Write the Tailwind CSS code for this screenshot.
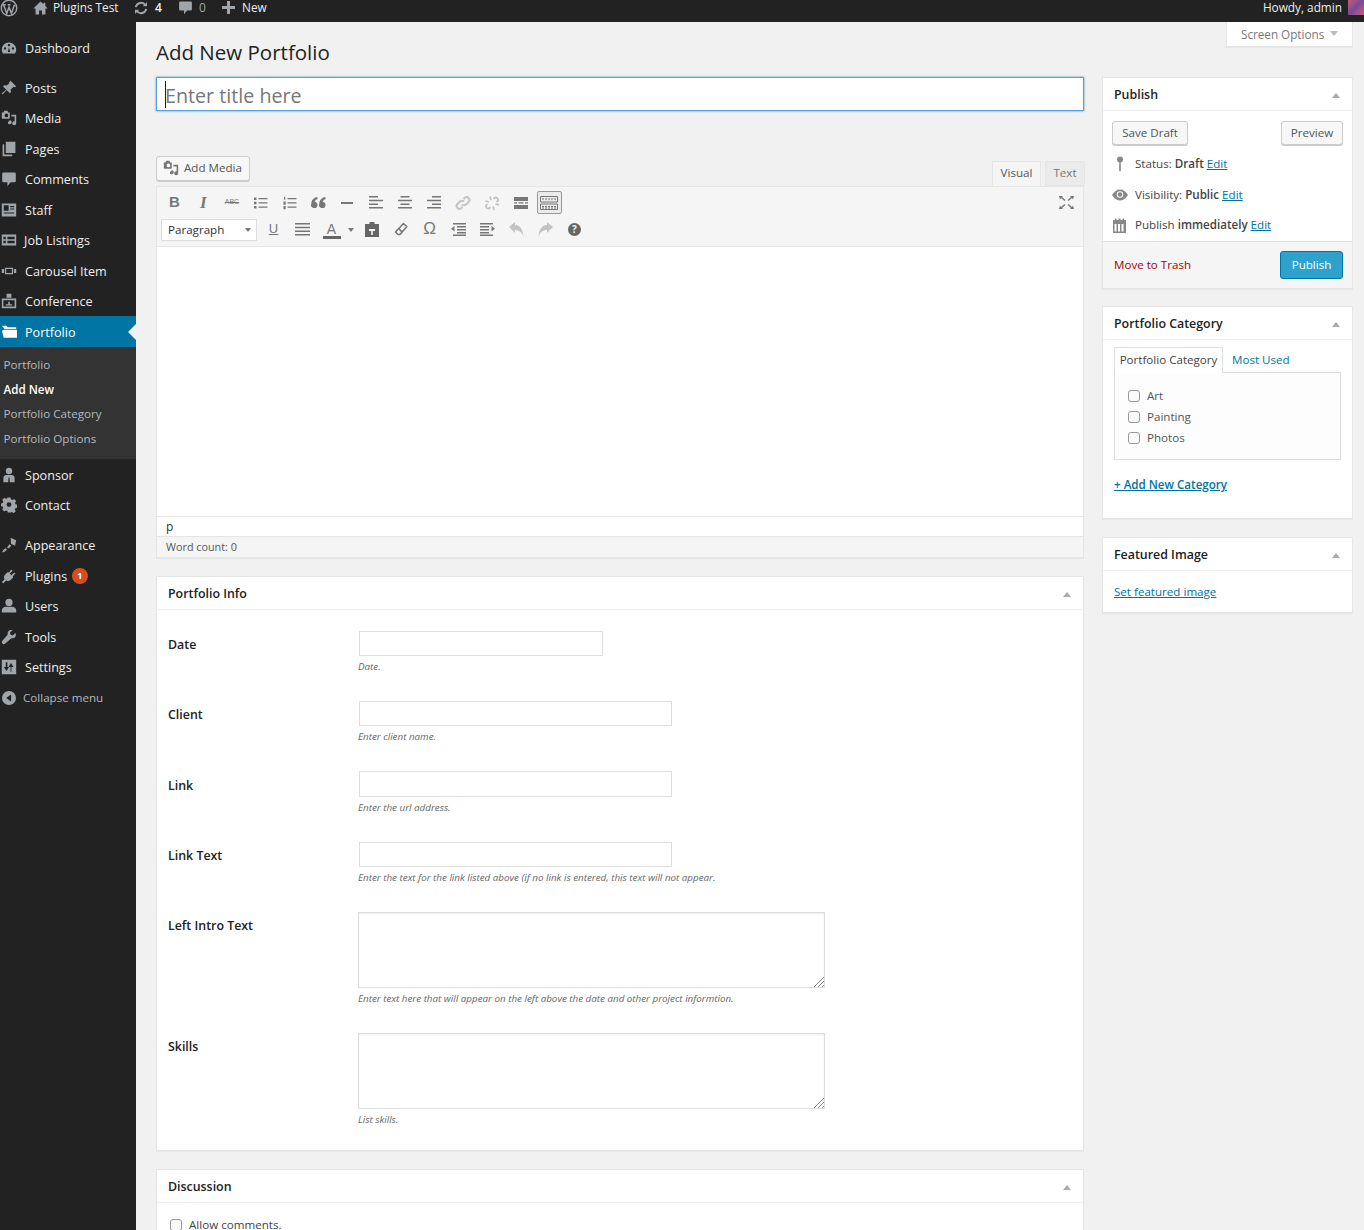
<!DOCTYPE html>
<html lang="en"><head><meta charset="utf-8"><title>Add New Portfolio</title>
<script src="https://cdn.jsdelivr.net/npm/@tailwindcss/browser@4"></script></head>
<body class="m-0 bg-[#f1f1f1] font-['Open_Sans',sans-serif] text-[12.6px] text-[#444]">
<div class="w-[1364px] h-[1230px] overflow-hidden flex flex-col">
<!-- top bar -->
<header class="h-[22px] shrink-0 bg-[#222] text-[#eee] flex items-center text-[11.8px] leading-[15px] pb-[7px] whitespace-nowrap">
  <svg class="w-[18px] h-[18px] shrink-0" viewBox="0 0 20 20" fill="none" stroke="#a0a5aa"><circle cx="10" cy="10" r="8.6" stroke-width="1.6"/><path d="M4 6.5 7.5 16 10 9l2.7 7 3.4-9.5M3.500 6.500h3M8.500 6.500h3.200" stroke-width="1.7"/></svg>
  <svg class="w-[17px] h-[16px] ml-[14px] shrink-0" viewBox="0 0 20 20" fill="#a0a5aa"><path d="M10 2 1 10.500h2.800V18h4.400v-5h3.600v5h4.400v-7.500H19l-3-2.900V3.500h-2.400v1.800z"/></svg>
  <span class="ml-[4px] w-[65px]">Plugins Test</span>
  <svg class="w-[16px] h-[16px] ml-[15px] shrink-0" viewBox="0 0 20 20" fill="none" stroke="#a0a5aa" stroke-width="2.4"><path d="M3.500 9a6.600 6.600 0 0 1 12-2.500M16.500 11a6.600 6.600 0 0 1-12 2.500"/><path d="M17.500 2.500v5.200h-5.200M2.500 17.500v-5.200h5.200" fill="#a0a5aa" stroke="none"/></svg>
  <span class="ml-[6px] w-[10px] text-[12px] font-semibold">4</span>
  <svg class="w-[15px] h-[15px] ml-[13px] shrink-0" viewBox="0 0 20 20" fill="#a0a5aa"><path d="M3 2h14a1.500 1.500 0 0 1 1.500 1.500v9A1.500 1.500 0 0 1 17 14h-5l-4 5v-5H3a1.500 1.500 0 0 1-1.500-1.500v-9A1.500 1.500 0 0 1 3 2z"/></svg>
  <span class="ml-[6px] w-[10px] text-[12px] text-[#a0a5aa]">0</span>
  <svg class="w-[13px] h-[13px] ml-[13px] shrink-0" viewBox="0 0 13 13" fill="#a0a5aa"><path d="M5 0h3v5h5v3H8v5H5V8H0V5h5z"/></svg>
  <span class="ml-[7px]">New</span>
  <span class="ml-auto mr-[6px] text-[#eee]">Howdy, admin</span>
  <span class="w-[16px] h-[16px] -mt-[2px] bg-gradient-to-br from-[#d1577c] via-[#7a4a94] to-[#c85a82]"></span>
</header>
<div class="flex flex-1 min-h-0">
<!-- sidebar -->
<aside class="w-[136px] shrink-0 bg-[#222] text-[#eee] pt-[10.250px]">
  <nav class="flex flex-col">
    <a class="h-[30.500px] flex items-center gap-[8px] pl-[1px]"><svg class="w-[16px] h-[16px] shrink-0" viewBox="0 0 20 20" fill="#a0a5aa"><path d="M10 3a9 9 0 0 0-9 9c0 2 .6 3.600 1.600 5h14.800A9 9 0 0 0 10 3zm-5 9a1.500 1.500 0 1 1 0-3 1.500 1.500 0 0 1 0 3zm4-4.500a1.500 1.500 0 1 1 2 0 1.500 1.500 0 0 1-2 0zM11.500 15h-3L10 9zM15 12a1.500 1.500 0 1 1 0-3 1.500 1.500 0 0 1 0 3z" fill-rule="evenodd"/></svg><span class="pt-[3px]">Dashboard</span></a>
    <div class="h-[9.500px]"></div>
    <a class="h-[30.500px] flex items-center gap-[8px] pl-[1px]"><svg class="w-[16px] h-[16px] shrink-0" viewBox="0 0 20 20" fill="#a0a5aa"><path d="M12 1l7 7-2 1-1-.5L12 12l.5 3-1.500 1.500-4-4L2 18l-1-1 5.500-5-4-4L4 6.500l3 .5L10.500 4 10 3z"/></svg><span class="pt-[3px]">Posts</span></a>
    <a class="h-[30.500px] flex items-center gap-[8px] pl-[1px]"><svg class="w-[16px] h-[16px] shrink-0" viewBox="0 0 20 20" fill="#a0a5aa"><path d="M1 3h2l1-2h4l1 2h2v7a1 1 0 0 1-1 1H2a1 1 0 0 1-1-1zm5.800 1.500a2.300 2.300 0 1 0 0 4.600 2.300 2.300 0 0 0 0-4.600zM13 6h6v10.500a2.500 2.500 0 1 1-2-2.400V8h-4zM10.500 13a2.500 2.500 0 1 1-2 2.500z" fill-rule="evenodd"/></svg><span class="pt-[3px]">Media</span></a>
    <a class="h-[30.500px] flex items-center gap-[8px] pl-[1px]"><svg class="w-[16px] h-[16px] shrink-0" viewBox="0 0 20 20" fill="#a0a5aa"><path d="M6 1h12v14H6zM2 4h2v13h10v2H2z"/></svg><span class="pt-[3px]">Pages</span></a>
    <a class="h-[30.500px] flex items-center gap-[8px] pl-[1px]"><svg class="w-[16px] h-[16px] shrink-0" viewBox="0 0 20 20" fill="#a0a5aa"><path d="M3 2h14a1.500 1.500 0 0 1 1.500 1.500v9A1.500 1.500 0 0 1 17 14h-5l-4 5v-5H3a1.500 1.500 0 0 1-1.500-1.500v-9A1.500 1.500 0 0 1 3 2z"/></svg><span class="pt-[3px]">Comments</span></a>
    <a class="h-[30.500px] flex items-center gap-[8px] pl-[1px]"><svg class="w-[16px] h-[16px] shrink-0" viewBox="0 0 20 20" fill="#a0a5aa"><path d="M1 2h18v16H1zm2.500 2v7h6V4zm8 1v1.500h5V5zm0 3v1.500h5V8zM3.500 13v1.500h13V13z" fill-rule="evenodd"/></svg><span class="pt-[3px]">Staff</span></a>
    <a class="h-[30.500px] flex items-center gap-[7px] pl-[1px]"><svg class="w-[16px] h-[16px] shrink-0" viewBox="0 0 20 20" fill="#a0a5aa"><path d="M1 3h18v14H1zm2 3v3h3V6zm5 0v3h9V6zm-5 5v3h3v-3zm5 0v3h9v-3z" fill-rule="evenodd"/></svg><span class="pt-[3px]">Job Listings</span></a>
    <a class="h-[30.500px] flex items-center gap-[8px] pl-[1px]"><svg class="w-[16px] h-[16px] shrink-0" viewBox="0 0 20 20" fill="#a0a5aa"><path d="M5 6h10v8H5zm1.500 1.500v5h7v-5zM1 7.500h3v5H1zm15 0h3v5h-3z" fill-rule="evenodd"/></svg><span class="pt-[3px]">Carousel Item</span></a>
    <a class="h-[30.500px] flex items-center gap-[8px] pl-[1px]"><svg class="w-[16px] h-[16px] shrink-0" viewBox="0 0 20 20" fill="#a0a5aa"><path d="M7 1h6v5H7zM1 7h18v12H1zm2 2v8h14V9zm3 5h8v1.500H6zm3-3h2v3H9z" fill-rule="evenodd"/></svg><span class="pt-[3px]">Conference</span></a>
    <a class="h-[31px] flex items-center gap-[7px] pl-[1px] bg-[#0074a2] text-white relative"><svg class="w-[17px] h-[15px] shrink-0" viewBox="0 0 20 18" fill="#fff"><path d="M1 2l5 0 2 2h10v2H4L2 3.500zM3 7h16v9.500H3L1 8z"/></svg><span class="pt-[3px]">Portfolio</span><span class="absolute right-0 top-[8px] w-0 h-0 border-y-[8px] border-y-transparent border-r-[8px] border-r-[#f1f1f1]"></span></a>
    <div class="bg-[#333] h-[112px] pt-[5px] pl-[3.500px] text-[#b4b9be] text-[11.650px] flex flex-col">
      <a class="h-[24.700px] flex items-center">Portfolio</a>
      <a class="h-[24.700px] flex items-center text-white font-semibold">Add New</a>
      <a class="h-[24.700px] flex items-center">Portfolio Category</a>
      <a class="h-[24.700px] flex items-center">Portfolio Options</a>
    </div>
    <a class="h-[30.500px] flex items-center gap-[8px] pl-[1px]"><svg class="w-[16px] h-[16px] shrink-0" viewBox="0 0 20 20" fill="#a0a5aa"><circle cx="10" cy="5" r="4"/><path d="M3 19v-5a4 4 0 0 1 4-4h6a4 4 0 0 1 4 4v5h-6l-.4-6h-1.200L9 19z"/></svg><span class="pt-[3px]">Sponsor</span></a>
    <a class="h-[30.500px] flex items-center gap-[8px] pl-[1px]"><svg class="w-[16px] h-[16px] shrink-0" viewBox="0 0 20 20" fill="#a0a5aa"><path d="M8 1h4l.5 2.500 1.800.8L16.500 3 19 5.800l-1.500 2 .5 1.700 2 .5v4l-2 .5-.8 1.800 1.300 2-2.800 2.400-2-1.300-1.700.6L11.500 20h-3L8 18l-1.800-.7-2 1.200L1.500 16l1.200-2L2 12.300 0 12V8.500l2-.5.800-1.800L1.500 4.200 4 1.500l2.100 1.300L8 2zm2 6a3 3 0 1 0 0 6 3 3 0 0 0 0-6z" fill-rule="evenodd" transform="translate(0 -.5)"/></svg><span class="pt-[3px]">Contact</span></a>
    <div class="h-[9.500px]"></div>
    <a class="h-[30.500px] flex items-center gap-[8px] pl-[1px]"><svg class="w-[16px] h-[16px] shrink-0" viewBox="0 0 20 20" fill="#a0a5aa"><path d="M12 1l7 3-1.500 7-5-2.500zM10.500 9l2.500 2-3.500 3.500-2-1.500zM6 14l1.500 1.500C6 18 3 19 1 19c1.500-1.500 2-4 5-5z"/></svg><span class="pt-[3px]">Appearance</span></a>
    <a class="h-[30.500px] flex items-center pl-[1px]"><svg class="w-[16px] h-[16px] shrink-0 mr-[8px]" viewBox="0 0 20 20" fill="#a0a5aa"><path d="M13 2l1.500 1.500L11 7l2 2 3.500-3.500L18 7l-3.500 3.500 1 1L12 15c-2 2-4 1.500-5.500.5L3 19l-2-1.500 3.500-3.500C3.500 12.500 3 10.500 5 8.500L8.500 5l1 1z"/></svg><span class="pt-[3px]">Plugins</span><span class="ml-[4.500px] w-[16px] h-[16px] rounded-full bg-[#d54e21] text-white text-[9px] font-bold flex items-center justify-center">1</span></a>
    <a class="h-[30.500px] flex items-center gap-[8px] pl-[1px]"><svg class="w-[16px] h-[16px] shrink-0" viewBox="0 0 20 20" fill="#a0a5aa"><circle cx="10" cy="5.500" r="4.500"/><path d="M1 18v-2c0-3 2.500-5 5-5h8c2.500 0 5 2 5 5v2z"/></svg><span class="pt-[3px]">Users</span></a>
    <a class="h-[30.500px] flex items-center gap-[8px] pl-[1px]"><svg class="w-[16px] h-[16px] shrink-0" viewBox="0 0 20 20" fill="#a0a5aa"><path d="M18 5l-3.500 3-2.500-.8L11.200 4.500 14.500 1.500C11 0 7.500 3 8.500 6.800L1.500 15a2.500 2.500 0 0 0 3.500 3.500l8-7C16.500 12.500 20 9 18 5z"/></svg><span class="pt-[3px]">Tools</span></a>
    <a class="h-[30.500px] flex items-center gap-[8px] pl-[1px]"><svg class="w-[16px] h-[16px] shrink-0" viewBox="0 0 20 20" fill="#a0a5aa"><path d="M1 1h18v18H1zm5 3v6H3.500L7 15l3-5H8V4zm7 12v-6h2.500L12.500 5l-3 5H12v6z" fill-rule="evenodd"/></svg><span class="pt-[3px]">Settings</span></a>
    <a class="h-[30.500px] flex items-center gap-[7px] pl-[2px] text-[#b4b9be]"><svg class="w-[14px] h-[14px] shrink-0" viewBox="0 0 20 20" fill="#a0a5aa"><path d="M10 0a10 10 0 1 0 0 20 10 10 0 0 0 0-20zm3 5v10L6 10z" fill-rule="evenodd"/></svg><span class="text-[11.600px]">Collapse menu</span></a>
  </nav>
</aside>
<!-- main -->
<main class="flex-1 min-w-0 relative pl-[20px] pr-[11px]">
  <div class="absolute right-[11px] top-0 w-[127px] h-[25px] bg-white border-x border-b border-[#e5e5e5] shadow-[0_1px_1px_rgba(0,0,0,0.04)] text-[11.700px] text-[#777] flex items-center pl-[14px] pt-[1px]">Screen Options<span class="ml-[6px] -mt-[3px] w-0 h-0 border-x-[4px] border-x-transparent border-t-[5px] border-t-[#bbb]"></span></div>
  <h1 class="text-[20.500px] leading-[29px] text-[#222] pt-[16px] h-[55px] font-normal">Add New Portfolio</h1>
  <div class="flex gap-[18px] items-start">
    <!-- left column -->
    <div class="w-[928px] shrink-0">
      <div class="h-[34px] bg-white border border-[#5b9dd9] shadow-[0_0_2px_rgba(30,140,190,0.8)] flex items-center pl-[8px] text-[19.700px] text-[#777]"><span class="w-px h-[27px] bg-[#222] -mr-px"></span><span class="pt-[4px]">Enter title here</span></div>
      <div class="h-[50px] flex items-end justify-between mt-[25px]">
        <button class="h-[25px] w-[94px] mb-[5px] bg-[#f7f7f7] border border-[#ccc] rounded-[3px] text-[11.600px] text-[#555] flex items-center pl-[6px] gap-[5px] pb-[1px] shadow-[0_1px_0_#ccc]"><svg class="w-[16px] h-[16px]" viewBox="0 0 20 20" fill="#777"><path d="M1 3h2l1-2h4l1 2h2v7a1 1 0 0 1-1 1H2a1 1 0 0 1-1-1zm5.800 1.500a2.300 2.300 0 1 0 0 4.600 2.300 2.300 0 0 0 0-4.600zM13 6h6v10.500a2.500 2.500 0 1 1-2-2.400V8h-4zM10.500 13a2.500 2.500 0 1 1-2 2.500z" fill-rule="evenodd"/></svg>Add Media</button>
        <div class="flex text-[11.600px] gap-[4px] -mr-[1px] items-end">
          <div class="w-[49px] h-[25px] pb-[2px] bg-[#f5f5f5] border border-[#e5e5e5] border-b-[#f5f5f5] flex items-center justify-center text-[#555]">Visual</div>
          <div class="w-[40px] h-[25px] pb-[2px] bg-[#ebebeb] border border-[#e5e5e5] flex items-center justify-center text-[#777]">Text</div>
        </div>
      </div>
      <!-- editor -->
      <div class="border border-[#e5e5e5] shadow-[0_1px_1px_rgba(0,0,0,0.04)] bg-white">
        <div class="h-[60px] bg-[#f5f5f5] border-b border-[#e5e5e5] relative pt-[4px] pl-[3px] text-[#777]">
          <div class="flex items-center h-[24px] pb-[1px]">
            <span class="w-[28.800px] text-center font-['Liberation_Sans',sans-serif] font-bold text-[15px]">B</span>
            <span class="w-[28.800px] text-center font-['Liberation_Serif',serif] font-bold italic text-[17px]">I</span>
            <span class="w-[28.800px] text-center font-['Liberation_Sans',sans-serif] text-[7px] line-through">ABC</span>
            <span class="w-[28.800px] flex justify-center"><svg class="w-[14px] h-[14px]" viewBox="0 0 14 14" fill="#777"><path d="M0 1.500h2.500v2.500H0zM0 5.800h2.500v2.500H0zM0 10h2.500v2.500H0zM4.500 2h9v1.200h-9zM4.500 6.300h9v1.200h-9zM4.500 10.600h9v1.200h-9z"/></svg></span>
            <span class="w-[28.800px] flex justify-center"><svg class="w-[14px] h-[14px]" viewBox="0 0 14 14" fill="#777"><path d="M1 .8h1.200v3H1zM.5 5.500h2.200v3.200H.5zM.5 10h2.200v3.200H.5zM4.500 2h9v1.200h-9zM4.500 6.300h9v1.200h-9zM4.500 10.600h9v1.200h-9z"/></svg></span>
            <span class="w-[28.800px] flex justify-center"><svg class="w-[15px] h-[11px]" viewBox="0 0 15 11" fill="#777"><path d="M6.500 0v2C5 2.500 4 3.500 3.800 4.800A3.200 3.200 0 1 1 .3 6.800C.3 3.500 2.500.6 6.500 0zm8 0v2c-1.500.5-2.500 1.500-2.700 2.800A3.200 3.200 0 1 1 8.300 6.800C8.300 3.500 10.500.6 14.500 0z"/></svg></span>
            <span class="w-[28.800px] flex justify-center"><span class="w-[12px] h-[2px] bg-[#777]"></span></span>
            <span class="w-[28.800px] flex justify-center"><svg class="w-[14px] h-[13px]" viewBox="0 0 14 13" fill="#777"><path d="M0 0h9v1.500H0zM0 3.700h14v1.500H0zM0 7.400h9v1.500H0zM0 11.100h14v1.500H0z"/></svg></span>
            <span class="w-[28.800px] flex justify-center"><svg class="w-[14px] h-[13px]" viewBox="0 0 14 13" fill="#777"><path d="M2.500 0h9v1.500h-9zM0 3.700h14v1.500H0zM2.500 7.400h9v1.500h-9zM0 11.100h14v1.500H0z"/></svg></span>
            <span class="w-[28.800px] flex justify-center"><svg class="w-[14px] h-[13px]" viewBox="0 0 14 13" fill="#777"><path d="M5 0h9v1.500H5zM0 3.700h14v1.500H0zM5 7.400h9v1.500H5zM0 11.100h14v1.500H0z"/></svg></span>
            <span class="w-[28.800px] ml-[1px] flex justify-center"><svg class="w-[16px] h-[16px]" viewBox="0 0 16 16" fill="none" stroke="#c4c4c4" stroke-width="2"><path d="M7 9.500a2.800 2.800 0 0 0 4 0l2.500-2.500a2.800 2.800 0 0 0-4-4L8.500 4M9 6.500a2.800 2.800 0 0 0-4 0L2.500 9a2.800 2.800 0 0 0 4 4l1-1"/></svg></span>
            <span class="w-[28.800px] flex justify-center"><svg class="w-[16px] h-[16px]" viewBox="0 0 16 16" fill="none" stroke="#c4c4c4" stroke-width="1.800"><path d="M9.500 4l1.500-1.500a2.500 2.500 0 0 1 3 3L12.500 7M6.500 12l-1.500 1.500a2.500 2.500 0 0 1-3-3L3.500 9M6 1.500 7 5M1.500 6 5 7M10 15l-1-3.500M15 10l-3.500-1"/></svg></span>
            <span class="w-[28.800px] flex justify-center"><svg class="w-[14px] h-[12px]" viewBox="0 0 14 12" fill="#777"><path d="M0 0h14v4H0zM0 5.200h3v1.400H0zM4.500 5.200h5v1.400h-5zM11 5.200h3v1.400h-3zM0 8h14v4H0z"/></svg></span>
            <span class="w-[25px] h-[23px] ml-[1.600px] flex justify-center items-center bg-[#ebebeb] border border-[#999] rounded-[2px]"><svg class="w-[18px] h-[14px]" viewBox="0 0 18 14" fill="none" stroke="#777"><path d="M.5.500h17v5.500H.5zM.5 8h17v5.500H.5z"/><path d="M2 3h14M2 10.500h14M2 12h14" stroke-dasharray="2 1"/></svg></span>
          </div>
          <div class="flex items-center h-[22px] mt-[4px]">
            <div class="w-[96px] ml-[1px] h-[22px] pb-[1px] bg-white border border-[#ddd] text-[11.600px] text-[#333] flex items-center pl-[6px]">Paragraph<span class="ml-auto mr-[5px] w-0 h-0 border-x-[3px] border-x-transparent border-t-[4px] border-t-[#777]"></span></div>
            <span class="w-[29px] ml-[2px] pb-[2px] text-center font-['Liberation_Sans',sans-serif] text-[13px] underline">U</span>
            <span class="w-[29px] pb-[2px] flex justify-center"><svg class="w-[15px] h-[13px]" viewBox="0 0 15 13" fill="#777"><path d="M0 0h15v1.500H0zM0 3.700h15v1.500H0zM0 7.400h15v1.500H0zM0 11.100h15v1.500H0z"/></svg></span>
            <span class="w-[29px] flex flex-col items-center leading-[14px] text-[#777]"><span class="text-[14px] font-['Liberation_Sans',sans-serif]">A</span><span class="w-[18px] h-[3px] bg-[#666]"></span></span>
            <span class="w-[9px] flex justify-center"><span class="w-0 h-0 border-x-[3px] border-x-transparent border-t-[4px] border-t-[#777]"></span></span>
            <span class="w-[29px] ml-[2px] pb-[2px] flex justify-center"><svg class="w-[14px] h-[15px]" viewBox="0 0 14 15" fill="#666"><path d="M0 2h4.500V0h5v2H14v13H0zm4 5v2h2.200v4h1.600V9H10V7z" fill-rule="evenodd"/></svg></span>
            <span class="w-[29px] pb-[2px] flex justify-center"><svg class="w-[14px] h-[14px]" viewBox="0 0 14 14" fill="none" stroke="#777" stroke-width="1.600" stroke-linejoin="round"><path d="M9.500 1.500 12.800 4.500 6 12.500H4L1.500 10z"/><path d="M4.800 6.500 8 10" /></svg></span>
            <span class="w-[29px] pb-[2px] text-center font-['Liberation_Sans',sans-serif] text-[17px]">Ω</span>
            <span class="w-[29px] pb-[2px] flex justify-center"><svg class="w-[15px] h-[13px]" viewBox="0 0 15 13" fill="#777"><path d="M2 0h13v1.500H2zM6 3h9v1.500H6zM6 6h9v1.500H6zM6 9h9v1.500H6zM2 11.500h13V13H2zM0 5.700 3.500 3v5.500z"/></svg></span>
            <span class="w-[29px] pb-[2px] flex justify-center"><svg class="w-[15px] h-[13px]" viewBox="0 0 15 13" fill="#777"><path d="M0 0h13v1.500H0zM0 3h9v1.500H0zM0 6h9v1.500H0zM0 9h9v1.500H0zM0 11.500h13V13H0zM15 5.700 11.500 3v5.500z"/></svg></span>
            <span class="w-[29px] pb-[2px] flex justify-center"><svg class="w-[15px] h-[15px]" viewBox="0 0 15 15" fill="#c4c4c4"><path d="M0 5l6-5v3c5 0 8 4 8.500 12C13 10 10 8 6 8v3z"/></svg></span>
            <span class="w-[29px] pb-[2px] flex justify-center"><svg class="w-[15px] h-[15px]" viewBox="0 0 15 15" fill="#c4c4c4"><path d="M15 5L9 0v3C4 3 1 7 .5 15 2 10 5 8 9 8v3z"/></svg></span>
            <span class="w-[29px] pb-[2px] flex justify-center"><span class="w-[13px] h-[13px] rounded-full bg-[#666] text-[#f5f5f5] text-[10px] font-bold leading-[13px] text-center">?</span></span>
          </div>
          <svg class="absolute right-[9px] top-[9px] w-[15px] h-[13px]" viewBox="0 0 15 13" fill="#777"><path d="M0 0h4L3 1l3.500 3L5.500 5 2 2 1 3.500zM15 0h-4l1 1-3.500 3 1 1L13 2l1 1.500zM0 13h4l-1-1 3.500-3-1-1L2 11l-1-1.500zM15 13h-4l1-1-3.500-3 1-1 3.500 3 1-1.500z"/></svg>
        </div>
        <div class="h-[270px] bg-white border-b border-[#e5e5e5]"></div>
        <div class="h-[20px] bg-white border-b border-[#e5e5e5] text-[12px] text-[#333] pl-[9px] leading-[20px]">p</div>
        <div class="h-[20px] bg-[#f5f5f5] text-[10.800px] text-[#555] pl-[9px] leading-[20px]">Word count: 0</div>
      </div>
      <!-- portfolio info -->
      <section class="mt-[18px] h-[575px] bg-white border border-[#e5e5e5] shadow-[0_1px_1px_rgba(0,0,0,0.04)]">
        <div class="h-[33px] pt-[3px] border-b border-[#eee] flex items-center justify-between pl-[11px] pr-[12px] text-[12.400px] font-semibold text-[#222]">Portfolio Info<span class="w-0 h-0 border-x-[4px] border-x-transparent border-b-[5px] border-b-[#aaa]"></span></div>
        <div class="pl-[11px] pt-[21px]">
          <div class="flex h-[70px]"><label class="w-[190px] pt-[5px] font-semibold text-[12.400px] text-[#222]">Date</label><div><div class="ml-[1px] w-[244px] h-[25px] border border-[#ddd] bg-white"></div><p class="text-[9.800px] italic text-[#666] mt-[4px]">Date.</p></div></div>
          <div class="flex h-[70px]"><label class="w-[190px] pt-[5px] font-semibold text-[12.400px] text-[#222]">Client</label><div><div class="ml-[1px] w-[313px] h-[25px] border border-[#ddd] bg-white"></div><p class="text-[9.800px] italic text-[#666] mt-[4px]">Enter client name.</p></div></div>
          <div class="flex h-[71px]"><label class="w-[190px] pt-[6px] font-semibold text-[12.400px] text-[#222]">Link</label><div><div class="ml-[1px] w-[313px] h-[26px] border border-[#ddd] bg-white"></div><p class="text-[9.800px] italic text-[#666] mt-[4px]">Enter the url address.</p></div></div>
          <div class="flex h-[70px]"><label class="w-[190px] pt-[5px] font-semibold text-[12.400px] text-[#222]">Link Text</label><div><div class="ml-[1px] w-[313px] h-[25px] border border-[#ddd] bg-white"></div><p class="text-[9.800px] italic text-[#666] mt-[4px]">Enter the text for the link listed above (if no link is entered, this text will not appear.</p></div></div>
          <div class="flex h-[121px]"><label class="w-[190px] pt-[5px] font-semibold text-[12.400px] text-[#222]">Left Intro Text</label><div><div class="relative w-[467px] h-[76px] border border-[#ddd] bg-white shadow-[inset_0_1px_2px_rgba(0,0,0,0.07)]"><svg class="absolute right-0 bottom-0 w-[11px] h-[11px]" viewBox="0 0 11 11" stroke="#888"><path d="M1 11 11 1M5 11l6-6M9 11l2-2"/></svg></div><p class="text-[9.800px] italic text-[#666] mt-[4px]">Enter text here that will appear on the left above the date and other project informtion.</p></div></div>
          <div class="flex"><label class="w-[190px] pt-[5px] font-semibold text-[12.400px] text-[#222]">Skills</label><div><div class="relative w-[467px] h-[76px] border border-[#ddd] bg-white shadow-[inset_0_1px_2px_rgba(0,0,0,0.07)]"><svg class="absolute right-0 bottom-0 w-[11px] h-[11px]" viewBox="0 0 11 11" stroke="#888"><path d="M1 11 11 1M5 11l6-6M9 11l2-2"/></svg></div><p class="text-[9.800px] italic text-[#666] mt-[4px]">List skills.</p></div></div>
        </div>
      </section>
      <section class="mt-[18px] h-[200px] bg-white border border-[#e5e5e5]">
        <div class="h-[33px] pt-[3px] border-b border-[#eee] flex items-center justify-between pl-[11px] pr-[12px] text-[12.400px] font-semibold text-[#222]">Discussion<span class="w-0 h-0 border-x-[4px] border-x-transparent border-b-[5px] border-b-[#aaa]"></span></div>
        <label class="flex items-center gap-[7px] pl-[13px] pt-[13px] text-[11.600px] text-[#444]"><span class="w-[12px] h-[12px] rounded-[3px] border border-[#999] bg-[#fafafa]"></span>Allow comments.</label>
      </section>
    </div>
    <!-- right column -->
    <div class="w-[251px] shrink-0 flex flex-col">
      <section class="h-[212px] bg-white border border-[#e5e5e5] shadow-[0_1px_1px_rgba(0,0,0,0.04)] flex flex-col">
        <div class="h-[33px] pt-[3px] shrink-0 border-b border-[#eee] flex items-center justify-between pl-[11px] pr-[12px] text-[12.400px] font-semibold text-[#222]">Publish<span class="w-0 h-0 border-x-[4px] border-x-transparent border-b-[5px] border-b-[#aaa]"></span></div>
        <div class="flex justify-between px-[9px] pt-[10px] text-[11.600px] text-[#555]">
          <button class="w-[76px] h-[24px] pb-[1px] bg-[#f7f7f7] border border-[#ccc] rounded-[3px] shadow-[0_1px_0_#ccc]">Save Draft</button>
          <button class="w-[62px] h-[24px] pb-[1px] bg-[#f7f7f7] border border-[#ccc] rounded-[3px] shadow-[0_1px_0_#ccc]">Preview</button>
        </div>
        <div class="text-[11.600px] text-[#444] pl-[9px] pt-[10px] flex flex-col">
          <div class="h-[18px] pb-[1px] flex items-center"><svg class="w-[16px] h-[15px] mr-[7px]" viewBox="0 0 16 15" fill="#888"><circle cx="8" cy="3.500" r="3"/><path d="M7.200 5h1.600v10H7.200z"/></svg>Status: <b class="font-semibold ml-[3px]">Draft</b><a class="ml-[3px] text-[#0074a2] underline">Edit</a></div>
          <div class="h-[18px] mt-[13px] flex items-center"><svg class="w-[16px] h-[12px] mr-[7px]" viewBox="0 0 16 12"><path d="M0 6c2-3.500 5-5.500 8-5.500S14 2.500 16 6c-2 3.500-5 5.500-8 5.500S2 9.500 0 6z" fill="#888"/><circle cx="8" cy="5.500" r="3.300" fill="#fff"/><circle cx="8" cy="5.500" r="2.200" fill="#888"/></svg>Visibility: <b class="font-semibold ml-[3px]">Public</b><a class="ml-[3px] text-[#0074a2] underline">Edit</a></div>
          <div class="h-[18px] mt-[12px] flex items-center"><svg class="w-[16px] h-[15px] mr-[7px]" viewBox="0 0 16 15" fill="#888"><path d="M1 2h2V.500h1.500V2h2V.500h2V2h2V.500h1.500V2h2v13H1zm1.500 4v7.500h2V6zm3.500 0v7.500h2V6zm3.500 0v7.500h2V6z" fill-rule="evenodd"/></svg>Publish <b class="font-semibold ml-[3px]">immediately</b><a class="ml-[3px] text-[#0074a2] underline">Edit</a></div>
        </div>
        <div class="mt-auto h-[47px] bg-[#f5f5f5] border-t border-[#ddd] flex items-center justify-between pl-[11px] pr-[9px] text-[11.600px]">
          <a class="text-[#a00]">Move to Trash</a>
          <button class="w-[63px] h-[28px] bg-[#2ea2cc] border border-[#0074a2] rounded-[3px] text-white">Publish</button>
        </div>
      </section>
      <section class="mt-[17px] h-[213px] bg-white border border-[#e5e5e5] shadow-[0_1px_1px_rgba(0,0,0,0.04)]">
        <div class="h-[33px] pt-[3px] border-b border-[#eee] flex items-center justify-between pl-[11px] pr-[12px] text-[12.400px] font-semibold text-[#222]">Portfolio Category<span class="w-0 h-0 border-x-[4px] border-x-transparent border-b-[5px] border-b-[#aaa]"></span></div>
        <div class="pl-[11px] pt-[7px] text-[11.600px]">
          <div class="flex h-[26px]"><span class="w-[109px] h-[26px] pb-[2px] z-10 bg-white border border-b-0 border-[#dfdfdf] flex items-center justify-center text-[#444]">Portfolio Category</span><a class="ml-[9px] text-[#0074a2] leading-[25px]">Most Used</a></div>
          <div class="w-[227px] h-[88px] -mt-px border border-[#dfdfdf] bg-[#fdfdfd] pt-[13px] pl-[13px] text-[#555] flex flex-col gap-[1px]">
            <label class="h-[20px] flex items-center gap-[7px]"><span class="w-[12px] h-[12px] rounded-[3px] border border-[#999] bg-[#fafafa]"></span>Art</label>
            <label class="h-[20px] flex items-center gap-[7px]"><span class="w-[12px] h-[12px] rounded-[3px] border border-[#999] bg-[#fafafa]"></span>Painting</label>
            <label class="h-[20px] flex items-center gap-[7px]"><span class="w-[12px] h-[12px] rounded-[3px] border border-[#999] bg-[#fafafa]"></span>Photos</label>
          </div>
          <a class="block mt-[16px] text-[#0074a2] underline font-semibold">+ Add New Category</a>
        </div>
      </section>
      <section class="mt-[18px] h-[76px] bg-white border border-[#e5e5e5] shadow-[0_1px_1px_rgba(0,0,0,0.04)]">
        <div class="h-[33px] pt-[3px] border-b border-[#eee] flex items-center justify-between pl-[11px] pr-[12px] text-[12.400px] font-semibold text-[#222]">Featured Image<span class="w-0 h-0 border-x-[4px] border-x-transparent border-b-[5px] border-b-[#aaa]"></span></div>
        <a class="block pl-[11px] pt-[12px] text-[11.600px] text-[#0074a2] underline">Set featured image</a>
      </section>
    </div>
  </div>
</main>
</div>
</div>
</body></html>
